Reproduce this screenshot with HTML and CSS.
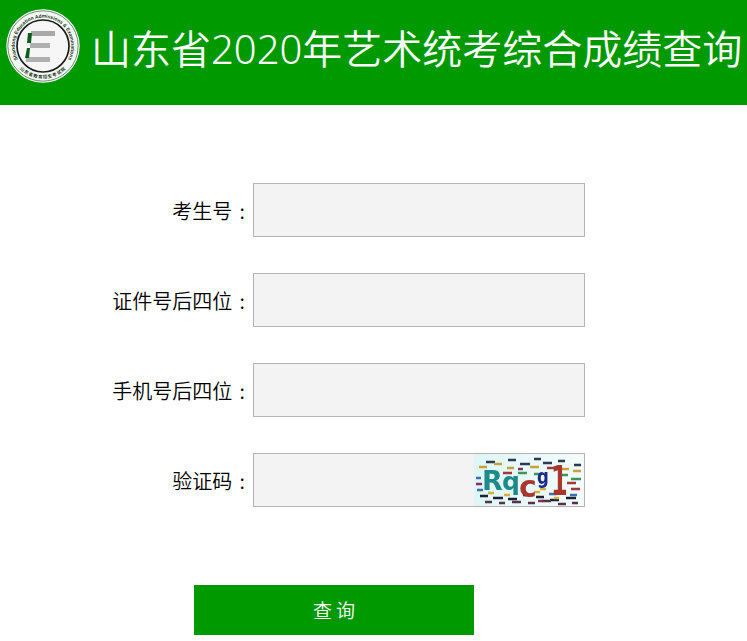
FILE: index.html
```html
<!DOCTYPE html>
<html>
<head>
  <meta charset="utf-8">
  <title>山东省2020年艺术统考综合成绩查询</title>
  <link rel="stylesheet" href="styles.css">
</head>
<body>
  <header class="top">
    <svg class="logo" width="74" height="74" viewBox="9 9 74 74">
      <defs>
        <path id="arcTop" d="M 26 66 A 28.3 28.3 0 1 1 66 66"></path>
        <path id="arcBottom" d="M 23 69 A 32.5 32.5 0 0 0 69 69"></path>
      </defs>
      <circle cx="46" cy="46" r="36.7" fill="#fff"></circle>
      <circle cx="46" cy="46" r="35.2" fill="#f2f8f2" stroke="#3a5a3a" stroke-width="0.7"></circle>
      <circle cx="46" cy="46" r="26" fill="#f6f6f6" stroke="#1c1c1c" stroke-width="1.7"></circle>
      <text class="logo-en"><textPath href="#arcTop" startOffset="50%" text-anchor="middle">Shandong Education Admissions &amp; Examinations</textPath></text>
      <text class="logo-cn"><textPath href="#arcBottom" startOffset="50%" text-anchor="middle">山东省教育招生考试院</textPath></text>
      <rect x="34" y="31" width="24" height="5" fill="#a9a9a9"></rect>
      <rect x="33" y="43" width="20" height="5" fill="#b0b0b0"></rect>
      <rect x="29" y="57" width="24" height="5" fill="#b0b0b0"></rect>
      <path d="M31 33 L35 33 L34 43 L30 43 Z" fill="#0c5c1c"></path>
      <path d="M30 48 L33 48 L32 58 L28 58 Z" fill="#0c5c1c"></path>
    </svg>
    <h1 class="title">山东省2020年艺术统考综合成绩查询</h1>
  </header>

  <form class="query-form">
    <div class="row">
      <label class="row-label">考生号 :</label>
      <input class="row-input" type="text">
    </div>
    <div class="row">
      <label class="row-label">证件号后四位 :</label>
      <input class="row-input" type="text">
    </div>
    <div class="row">
      <label class="row-label">手机号后四位 :</label>
      <input class="row-input" type="text">
    </div>
    <div class="row">
      <label class="row-label">验证码 :</label>
      <div class="code-box">
        <input class="row-input" type="text">
        <!-- captcha picture -->
        <svg class="captcha" width="110" height="52" viewBox="0 0 110 52">
          <defs>
            <linearGradient id="capBg" x1="0" x2="1" y1="0" y2="0">
              <stop offset="0" stop-color="#dff6f6"></stop>
              <stop offset="1" stop-color="#f4fbfb"></stop>
            </linearGradient>
          </defs>
          <rect width="110" height="52" fill="url(#capBg)"></rect>
          <g stroke-width="2.4">
            <path d="M12 8h9M34 6h8M46 10h10M60 5h7M69 9h9M84 7h7M100 11h7" stroke="#2b3a55"></path>
            <path d="M5 13h8M20 10h8M33 14h7M56 13h9M86 15h9M99 17h8" stroke="#c9a13a"></path>
            <path d="M44 19h9M60 20h6M88 21h6M97 25h10" stroke="#3a9a55"></path>
            <path d="M29 19h9M73 14h7M93 29h9M97 35h9" stroke="#a33a3a"></path>
            <path d="M2 24h5M3 36h6M96 41h7M75 40h8" stroke="#3c6fb0"></path>
            <path d="M6 42h8M19 44h10M34 45h9M49 41h8M62 43h8M76 46h9M92 44h10" stroke="#1c2233"></path>
            <path d="M11 48h7M25 49h6M38 48h9M54 49h7M68 47h9M84 50h8M98 49h6" stroke="#553344"></path>
            <path d="M14 39h6M30 41h6M60 38h6M66 35h6M80 44h5" stroke="#d2b23c"></path>
            <path d="M2 30h6M44 15h5M64 47h5" stroke="#8a2f5a"></path>
          </g>
          <text class="cap" x="8" y="36" fill="#1f8a8a">R</text>
          <text class="cap cap-q" x="28" y="36" fill="#1f8a8a">q</text>
          <text class="cap cap-c" x="45" y="43" fill="#a8382e">c</text>
          <text class="cap cap-g" transform="translate(63 30) scale(.75 1)" fill="#1c2a8a">g</text>
          <text class="cap cap-one" transform="translate(77 41) scale(.6 1)" fill="#a8382e">1</text>
        </svg>
      </div>
    </div>
    <button class="submit" type="button">查 询</button>
  </form>
</body>
</html>
```

FILE: styles.css
```css
body {
  margin: 0;
  padding: 0;
  background-color: #fff;
  color: #000;
  font-family: "Noto Sans CJK SC", "Noto Sans", sans-serif;
}

.top {
  display: flex;
  align-items: center;
  height: 105px;
  padding-left: 6px;
  background-color: #009900;
  overflow: hidden;
}

.logo {
  flex: none;
  margin-bottom: 13px;
}

.logo-en {
  font-family: "Liberation Sans", sans-serif;
  font-size: 4.9px;
  font-weight: bold;
  fill: #223322;
}

.logo-cn {
  font-family: "Noto Sans CJK SC", sans-serif;
  font-size: 4.4px;
  font-weight: bold;
  letter-spacing: 0.7px;
  fill: #223322;
}

.title {
  margin: 0 0 0 11px;
  color: #fff;
  font-family: "Noto Sans", "Noto Sans CJK SC", sans-serif;
  font-size: 40px;
  font-weight: 350;
  line-height: 1;
  white-space: nowrap;
  position: relative;
  top: -4px;
}

.query-form {
  display: flex;
  flex-direction: column;
  gap: 36px;
  padding-top: 78px;
}

.row {
  display: flex;
  align-items: center;
}

.row-label {
  width: 245px;
  padding: 1px 8px 0 0;
  font-size: 20px;
  font-weight: 350;
  line-height: 53px;
  text-align: right;
  white-space: nowrap;
  word-spacing: 3px;
}

.row-input {
  display: block;
  box-sizing: border-box;
  width: 332px;
  height: 54px;
  margin: 0;
  padding: 0 10px;
  background-color: #f3f3f3;
  border: 1px solid #b4b4b4;
  border-radius: 0;
  outline: none;
}

.code-box {
  position: relative;
  width: 332px;
  height: 54px;
}

.captcha {
  position: absolute;
  top: 1px;
  right: 1px;
  filter: blur(0.4px);
}

.cap {
  font-family: "DejaVu Sans", sans-serif;
  font-size: 27px;
  font-weight: bold;
}

.cap-q {
  font-size: 25px;
}

.cap-c {
  font-size: 30px;
}

.cap-g {
  font-size: 22px;
}

.cap-one {
  font-size: 40px;
}

.submit {
  width: 280px;
  height: 50px;
  margin: 42px 0 0 194px;
  padding-bottom: 3px;
  background-color: #009900;
  color: #fff;
  border: none;
  font-family: inherit;
  font-size: 19px;
  font-weight: 350;
  cursor: pointer;
}
```
